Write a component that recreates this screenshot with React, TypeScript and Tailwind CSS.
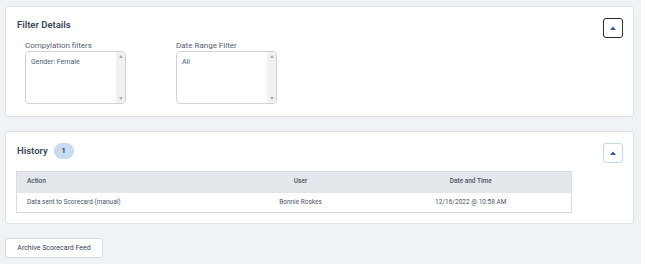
import React from "react";

function Caret() {
  return (
    <svg width="6" height="4" viewBox="0 0 6 4" className="block">
      <path d="M0 4 L3 0.5 L6 4 Z" fill="#2c5a93" />
    </svg>
  );
}

function ScrollBox({ text }: { text: string }) {
  return (
    <div className="flex w-[101px] h-[53px] rounded-[4px] border border-[#cfd3d8] bg-white overflow-hidden">
      <div className="flex-1 pl-[5px] pt-[5px] text-[7px] text-[#4b5d73]">{text}</div>
      <div className="w-[9px] bg-[#f1f1f1] flex flex-col justify-between items-center py-[3px]">
        <svg width="4" height="3" viewBox="0 0 4 3"><path d="M0 3 L2 0 L4 3 Z" fill="#a9a9a9" /></svg>
        <svg width="4" height="3" viewBox="0 0 4 3"><path d="M0 0 L2 3 L4 0 Z" fill="#a9a9a9" /></svg>
      </div>
    </div>
  );
}

export default function App() {
  return (
    <div className="w-[645px] h-[269px] bg-white" style={{ fontFamily: "Roboto, 'Liberation Sans', sans-serif" }}>
      <div className="w-[641px] h-[264px] bg-[#f0f3f6] pl-[5px] pt-[6px] flex flex-col">
        <div className="w-[629px] h-[111px] bg-white border border-[#dde1e6] rounded-[3px] pl-[11px] pr-[10px] pt-[11px] flex justify-between">
          <div className="flex flex-col">
            <h2 className="text-[9.5px] leading-[12px] font-semibold text-[#3a4657] mt-[1px]">Filter Details</h2>
            <div className="flex mt-[10px] ml-[8px]">
              <div className="w-[151px] flex flex-col">
                <span className="text-[8px] leading-[10px] text-[#56606d]">Compylation filters</span>
                <ScrollBox text="Gender: Female" />
              </div>
              <div className="flex flex-col">
                <span className="text-[8px] leading-[10px] text-[#56606d]">Date Range Filter</span>
                <ScrollBox text="All" />
              </div>
            </div>
          </div>
          <button className="w-[20px] h-[20px] rounded-[3px] border-[1.5px] border-[#2b2b2b] bg-white flex items-center justify-center">
            <Caret />
          </button>
        </div>

        <div className="w-[629px] h-[93px] mt-[14px] bg-white border border-[#dde1e6] rounded-[3px] pl-[10px] pr-[10px] pt-[11px]">
          <div className="flex justify-between items-start">
            <div className="flex items-center h-[16px] pl-[1px]">
              <h2 className="text-[9.5px] font-semibold text-[#3a4657]">History</h2>
              <span className="ml-[6px] w-[20px] h-[16px] rounded-full bg-[#c7dcf0] flex items-center justify-center text-[7.5px] font-semibold text-[#2f3b4a]">1</span>
            </div>
            <button className="w-[20px] h-[20px] rounded-[3px] border border-[#c6d7e8] bg-white flex items-center justify-center">
              <Caret />
            </button>
          </div>
          <table className="mt-[8px] w-[556px] border border-[#d7dbe0] text-[6.5px] text-[#4a5565] border-collapse">
            <thead>
              <tr className="bg-[#e4e7eb] h-[21px]">
                <th className="w-[214px] text-left pl-[10px] font-medium">Action</th>
                <th className="w-[140px] text-center font-medium">User</th>
                <th className="text-center font-medium">Date and Time</th>
              </tr>
            </thead>
            <tbody>
              <tr className="h-[20px] border-t border-[#e3e6ea]">
                <td className="pl-[10px]">Data sent to Scorecard (manual)</td>
                <td className="text-center">Bonnie Roskes</td>
                <td className="text-center">12/16/2022 @ 10:58 AM</td>
              </tr>
            </tbody>
          </table>
        </div>

        <button className="mt-[14px] w-[98px] h-[20px] rounded-[3px] border border-[#d5d9de] bg-white text-[7px] text-[#34435a] flex items-center justify-center">
          Archive Scorecard Feed
        </button>
      </div>
    </div>
  );
}
